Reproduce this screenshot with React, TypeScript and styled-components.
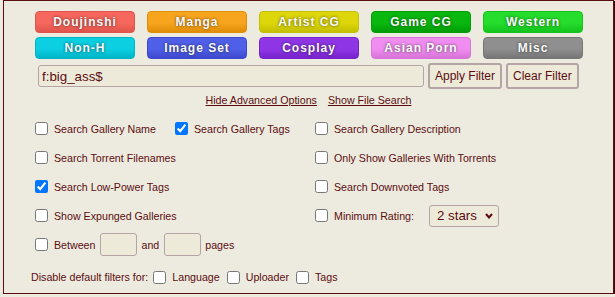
import styled, { createGlobalStyle } from 'styled-components';

const GlobalStyle = createGlobalStyle`
    html, body {
        margin: 0;
        padding: 0;
        background: #edebdf;
    }
    body {
        font-family: "Liberation Sans", Arial, sans-serif;
        color: #5c0d11;
    }
`;

const Panel = styled.div`
    box-sizing: border-box;
    width: 611px;
    margin-left: 3px;
    background: #edebdf;
    border: 1px solid #5c0d12;
    box-shadow: 1px 1px 0 #3a0a0c;
    padding: 10px 0 8px 27px;
`;

const CategoryGrid = styled.div`
    display: grid;
    grid-template-columns: repeat(5, 100px);
    grid-auto-rows: 22px;
    column-gap: 12px;
    row-gap: 4px;
    margin-left: 4px;
`;

const Category = styled.div<{ $bg: string; $edge: string }>`
    box-sizing: border-box;
    display: flex;
    align-items: center;
    justify-content: center;
    border: 1px solid ${p => p.$edge};
    border-radius: 4px;
    background: linear-gradient(180deg, ${p => p.$bg} 0%, ${p => p.$bg} 55%, ${p => p.$edge} 100%);
    color: #f8f8f8;
    font-size: 12px;
    font-weight: bold;
    letter-spacing: 1px;
    text-shadow: 0 0 3px rgba(0, 0, 0, 0.65);
`;

const FilterRow = styled.div`
    display: flex;
    align-items: center;
    gap: 4px;
    margin: 4px 0 0 7px;
    height: 26px;
`;

const SearchInput = styled.input`
    box-sizing: border-box;
    width: 386px;
    height: 22px;
    padding: 0 3px;
    background: #edeada;
    border: 1px solid #b5a4a4;
    border-radius: 3px;
    color: #5c0d11;
    font-family: "Liberation Sans", Arial, sans-serif;
    font-size: 13.33px;
    outline: none;
`;

const FilterButton = styled.button`
    box-sizing: border-box;
    height: 26px;
    padding: 0 5px;
    background: #edeada;
    border: 2px solid #b5a4a4;
    border-radius: 3px;
    color: #5c0d11;
    font-family: "Liberation Sans", Arial, sans-serif;
    font-size: 12px;
`;

const LinkRow = styled.div`
    display: flex;
    justify-content: center;
    gap: 11px;
    margin: 5px 27px 0 0;
    line-height: 12px;
    font-size: 10.67px;
`;

const Link = styled.a`
    color: #5c0d11;
    text-decoration: underline;
`;

const OptionGrid = styled.div`
    display: grid;
    grid-template-columns: 140px 140px 1fr;
    grid-auto-rows: 29px;
    margin: 8px 0 0 4px;
`;

const Option = styled.label<{ $span?: number }>`
    display: flex;
    align-items: center;
    grid-column: span ${p => p.$span || 1};
    font-size: 10.67px;
    color: #5c0d11;
    white-space: nowrap;
`;

const Check = styled.input.attrs({ type: 'checkbox' })`
    width: 13px;
    height: 13px;
    margin: 0 6px 0 0;
    flex: none;
`;

const PageInput = styled.input`
    box-sizing: border-box;
    width: 37px;
    height: 23px;
    margin: 0 4px 0 5px;
    background: #edeada;
    border: 1px solid #b5a4a4;
    border-radius: 3px;
`;

const Gap = styled.span`
    margin-left: 0px;
`;

const SelectWrap = styled.span`
    position: relative;
    display: inline-flex;
    margin-left: 15px;
`;

const Select = styled.select`
    box-sizing: border-box;
    appearance: none;
    width: 70px;
    height: 22px;
    padding: 0 0 0 7px;
    background: #edeada;
    border: 1px solid #b5a4a4;
    border-radius: 3px;
    color: #5c0d11;
    font-family: "Liberation Sans", Arial, sans-serif;
    font-size: 13.33px;
`;

const Chevron = styled.svg`
    position: absolute;
    right: 6px;
    top: 8px;
    pointer-events: none;
`;

const DisableRow = styled.div`
    display: flex;
    align-items: center;
    margin-top: 10px;
    height: 16px;
    font-size: 10.67px;
`;

const Lead = styled.span`
    margin-right: 5px;
`;

const Small = styled.label`
    display: flex;
    align-items: center;
    margin-right: 7px;
`;

const categories = [
    { name: 'Doujinshi', bg: '#f6675d', edge: '#e0544b' },
    { name: 'Manga', bg: '#f7a41e', edge: '#e08e06' },
    { name: 'Artist CG', bg: '#dcd60a', edge: '#c4bf00' },
    { name: 'Game CG', bg: '#09b80f', edge: '#029c07' },
    { name: 'Western', bg: '#25dd2d', edge: '#14c31c' },
    { name: 'Non-H', bg: '#0ccfe2', edge: '#00b4c8' },
    { name: 'Image Set', bg: '#505fe8', edge: '#3c49cf' },
    { name: 'Cosplay', bg: '#8e36e6', edge: '#7723cd' },
    { name: 'Asian Porn', bg: '#f08df0', edge: '#d874d9' },
    { name: 'Misc', bg: '#8f8f8f', edge: '#767676' },
];

export default function App() {
    return (
        <>
            <GlobalStyle />
            <Panel>
                <CategoryGrid>
                    {categories.map(c => (
                        <Category key={c.name} $bg={c.bg} $edge={c.edge}>{c.name}</Category>
                    ))}
                </CategoryGrid>

                <FilterRow>
                    <SearchInput defaultValue="f:big_ass$" />
                    <FilterButton>Apply Filter</FilterButton>
                    <FilterButton>Clear Filter</FilterButton>
                </FilterRow>

                <LinkRow>
                    <Link href="#">Hide Advanced Options</Link>
                    <Link href="#">Show File Search</Link>
                </LinkRow>

                <OptionGrid>
                    <Option><Check />Search Gallery Name</Option>
                    <Option><Check defaultChecked />Search Gallery Tags</Option>
                    <Option><Check />Search Gallery Description</Option>

                    <Option $span={2}><Check />Search Torrent Filenames</Option>
                    <Option><Check />Only Show Galleries With Torrents</Option>

                    <Option $span={2}><Check defaultChecked />Search Low-Power Tags</Option>
                    <Option><Check />Search Downvoted Tags</Option>

                    <Option $span={2}><Check />Show Expunged Galleries</Option>
                    <Option>
                        <Check />Minimum Rating:
                        <SelectWrap>
                            <Select defaultValue="2">
                                <option value="2">2 stars</option>
                                <option value="3">3 stars</option>
                                <option value="4">4 stars</option>
                                <option value="5">5 stars</option>
                            </Select>
                            <Chevron width="8" height="6" viewBox="0 0 8 6">
                                <polyline points="1,1 4,4.5 7,1" fill="none" stroke="#5c0d11" strokeWidth="2" />
                            </Chevron>
                        </SelectWrap>
                    </Option>

                    <Option $span={3}>
                        <Check />Between<PageInput />and<PageInput /><Gap>pages</Gap>
                    </Option>
                </OptionGrid>

                <DisableRow>
                    <Lead>Disable default filters for:</Lead>
                    <Small><Check />Language</Small>
                    <Small><Check />Uploader</Small>
                    <Small><Check />Tags</Small>
                </DisableRow>
            </Panel>
        </>
    );
}
